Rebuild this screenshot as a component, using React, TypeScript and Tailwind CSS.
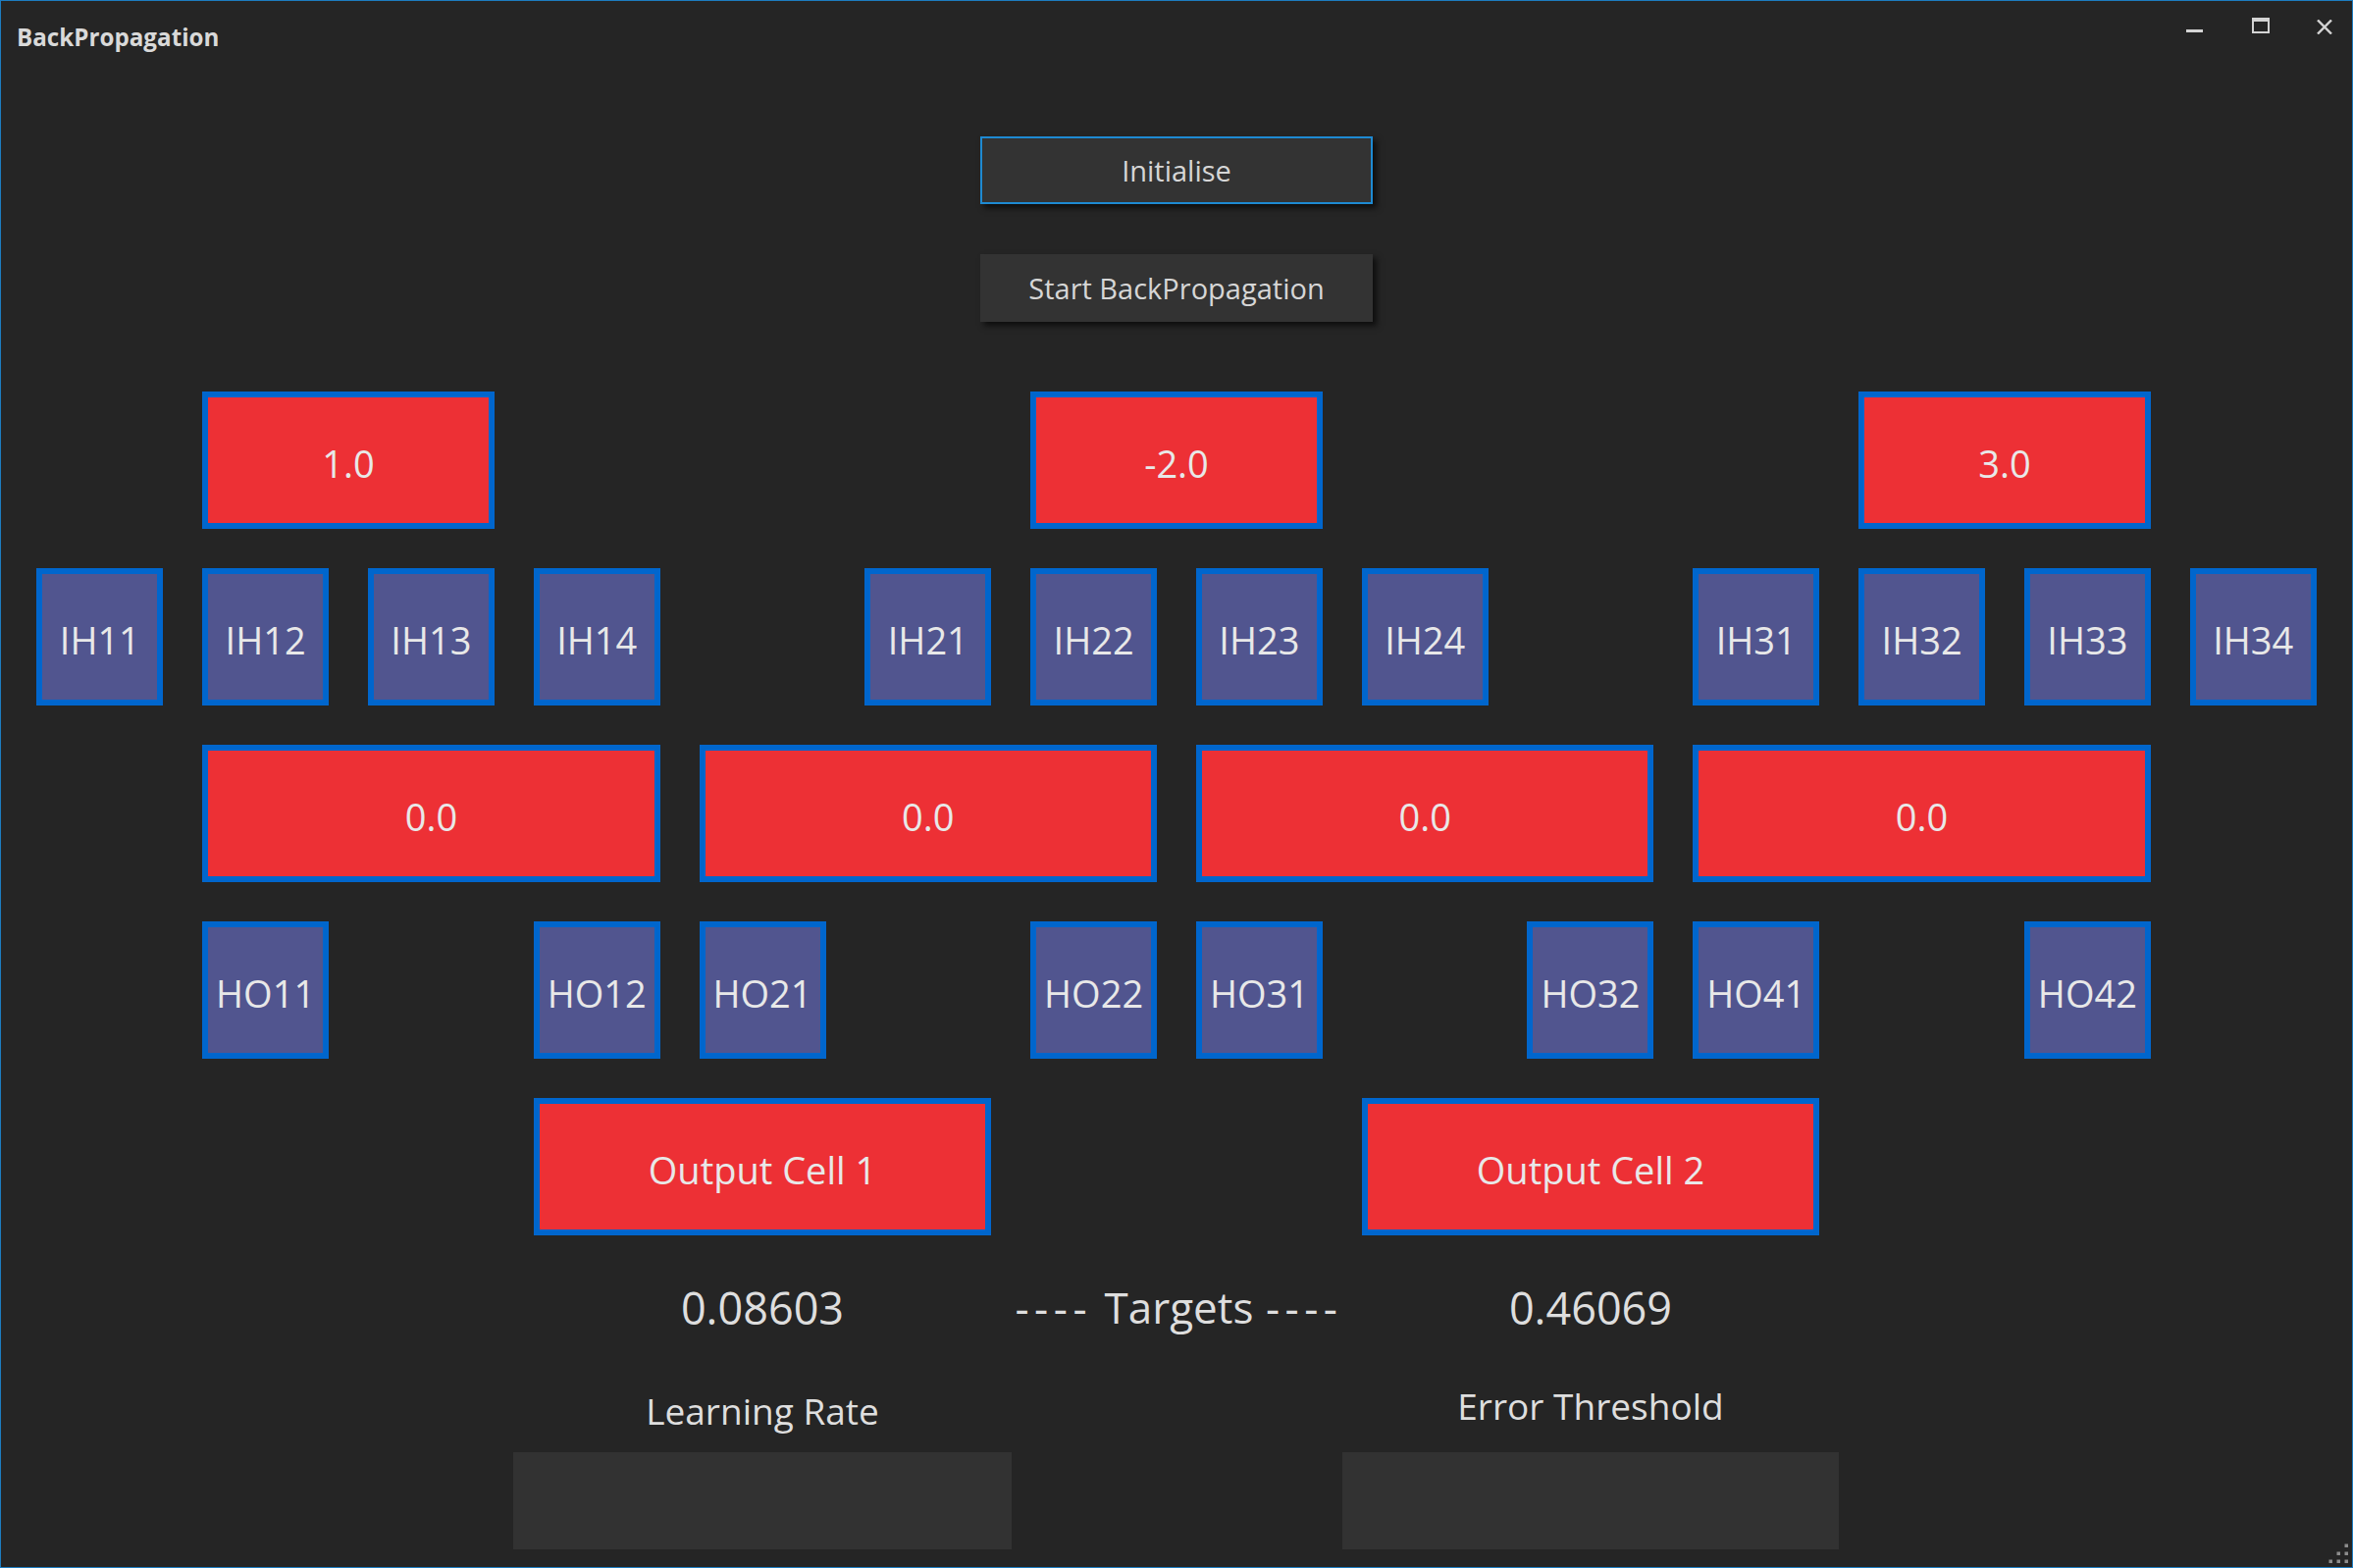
import React from "react";

type Cell = { label: string; pos: string; kind: "red" | "node" };

// row / column placement on the 14 column network grid
const cells: Cell[] = [
  { label: "1.0", pos: "row-start-1 col-start-2 col-span-2", kind: "red" },
  { label: "-2.0", pos: "row-start-1 col-start-7 col-span-2", kind: "red" },
  { label: "3.0", pos: "row-start-1 col-start-12 col-span-2", kind: "red" },

  { label: "IH11", pos: "row-start-2 col-start-1", kind: "node" },
  { label: "IH12", pos: "row-start-2 col-start-2", kind: "node" },
  { label: "IH13", pos: "row-start-2 col-start-3", kind: "node" },
  { label: "IH14", pos: "row-start-2 col-start-4", kind: "node" },
  { label: "IH21", pos: "row-start-2 col-start-6", kind: "node" },
  { label: "IH22", pos: "row-start-2 col-start-7", kind: "node" },
  { label: "IH23", pos: "row-start-2 col-start-8", kind: "node" },
  { label: "IH24", pos: "row-start-2 col-start-9", kind: "node" },
  { label: "IH31", pos: "row-start-2 col-start-11", kind: "node" },
  { label: "IH32", pos: "row-start-2 col-start-12", kind: "node" },
  { label: "IH33", pos: "row-start-2 col-start-13", kind: "node" },
  { label: "IH34", pos: "row-start-2 col-start-14", kind: "node" },

  { label: "0.0", pos: "row-start-3 col-start-2 col-span-3", kind: "red" },
  { label: "0.0", pos: "row-start-3 col-start-5 col-span-3", kind: "red" },
  { label: "0.0", pos: "row-start-3 col-start-8 col-span-3", kind: "red" },
  { label: "0.0", pos: "row-start-3 col-start-11 col-span-3", kind: "red" },

  { label: "HO11", pos: "row-start-4 col-start-2", kind: "node" },
  { label: "HO12", pos: "row-start-4 col-start-4", kind: "node" },
  { label: "HO21", pos: "row-start-4 col-start-5", kind: "node" },
  { label: "HO22", pos: "row-start-4 col-start-7", kind: "node" },
  { label: "HO31", pos: "row-start-4 col-start-8", kind: "node" },
  { label: "HO32", pos: "row-start-4 col-start-10", kind: "node" },
  { label: "HO41", pos: "row-start-4 col-start-11", kind: "node" },
  { label: "HO42", pos: "row-start-4 col-start-13", kind: "node" },

  { label: "Output Cell 1", pos: "row-start-5 col-start-4 col-span-3", kind: "red" },
  { label: "Output Cell 2", pos: "row-start-5 col-start-9 col-span-3", kind: "red" },
];

function WindowControls() {
  return (
    <div className="flex items-start pt-[17px] pr-[20px] text-[#d4d4d4]">
      {/* minimise */}
      <svg width="17" height="16" viewBox="0 0 17 16" className="block">
        <rect x="0" y="12" width="17" height="3" fill="currentColor" />
      </svg>
      {/* maximise */}
      <svg width="18" height="16" viewBox="0 0 18 16" className="block ml-[50px]">
        <rect x="1" y="1" width="16" height="14" fill="none" stroke="currentColor" strokeWidth="2" />
        <rect x="1" y="1" width="16" height="3" fill="currentColor" />
      </svg>
      {/* close */}
      <svg width="16" height="15" viewBox="0 0 16 15" className="block ml-[48px] mt-[2px]">
        <path d="M1 0.5 L15 14.5 M15 0.5 L1 14.5" stroke="currentColor" strokeWidth="2.4" />
      </svg>
    </div>
  );
}

export default function App() {
  return (
    <div className="relative w-[2398px] h-[1598px] bg-[#252525] border border-[#1d7cc0] font-['Open_Sans',sans-serif] text-[#e6e6e6] overflow-hidden">
      {/* Title bar */}
      <div className="flex justify-between h-[76px]">
        <div className="pl-[16px] pt-[25px] text-[24.2px] leading-none font-bold text-[#d9d9d9]">
          BackPropagation
        </div>
        <WindowControls />
      </div>

      <div className="flex flex-col items-center">
        <button className="mt-[62px] w-[400px] h-[69px] bg-[#333333] border-2 border-[#1e8ad2] text-[29px] leading-none text-[#d6d6d6] shadow-[4px_4px_6px_rgba(0,0,0,0.65)]">
          Initialise
        </button>
        <button className="mt-[51px] w-[400px] h-[69px] bg-[#333333] text-[29px] leading-none text-[#d6d6d6] shadow-[4px_4px_6px_rgba(0,0,0,0.65)]">
          Start BackPropagation
        </button>

        {/* Network */}
        <div className="mt-[71px] grid grid-cols-[repeat(14,129px)] grid-rows-[repeat(5,140px)] gap-x-[39.8px] gap-y-[40px]">
          {cells.map((c, i) => (
            <div
              key={i}
              className={`${c.pos} ${
                c.kind === "red" ? "bg-[#ed3035]" : "bg-[#51558f]"
              } border-[6px] border-[#0066cd] pt-[6px] flex items-center justify-center text-[38px] leading-none text-[#e8e8e8]`}
            >
              {c.label}
            </div>
          ))}
        </div>

        {/* Targets and parameters */}
        <div className="mt-[51px] grid grid-cols-[repeat(14,129px)] gap-x-[39.8px] text-[#dedede]">
          <div className="row-start-1 col-start-4 col-span-3 text-center text-[45px] leading-none">0.08603</div>
          <div className="row-start-1 col-start-6 col-span-4 text-center text-[44px] leading-none whitespace-nowrap">
            <span className="tracking-[5.5px] mr-[1px]">----</span> Targets{" "}
            <span className="tracking-[5.5px] ml-[1px] mr-[-5px]">----</span>
          </div>
          <div className="row-start-1 col-start-9 col-span-3 text-center text-[45px] leading-none">0.46069</div>

          <div className="row-start-2 col-start-4 col-span-3 mt-[64px] text-center text-[37px] leading-none">
            Learning Rate
          </div>
          <div className="row-start-2 col-start-9 col-span-3 mt-[59px] text-center text-[37px] leading-none">
            Error Threshold
          </div>

          <div className="row-start-3 col-start-3 col-span-5 justify-self-center mt-[24px] w-[508px] h-[99px] bg-[#323232]" />
          <div className="row-start-3 col-start-8 col-span-5 justify-self-center mt-[24px] w-[506px] h-[99px] bg-[#323232]" />
        </div>
      </div>

      {/* resize grip */}
      <svg width="22" height="22" viewBox="0 0 22 22" className="absolute left-[2371px] top-[1571px]">
        {[
          [19, 3],
          [11, 11],
          [19, 11],
          [3, 19],
          [11, 19],
          [19, 19],
        ].map(([x, y], i) => (
          <rect key={i} x={x - 1.5} y={y - 1.5} width="3.5" height="3.5" fill="#8c8c8c" />
        ))}
      </svg>
    </div>
  );
}
